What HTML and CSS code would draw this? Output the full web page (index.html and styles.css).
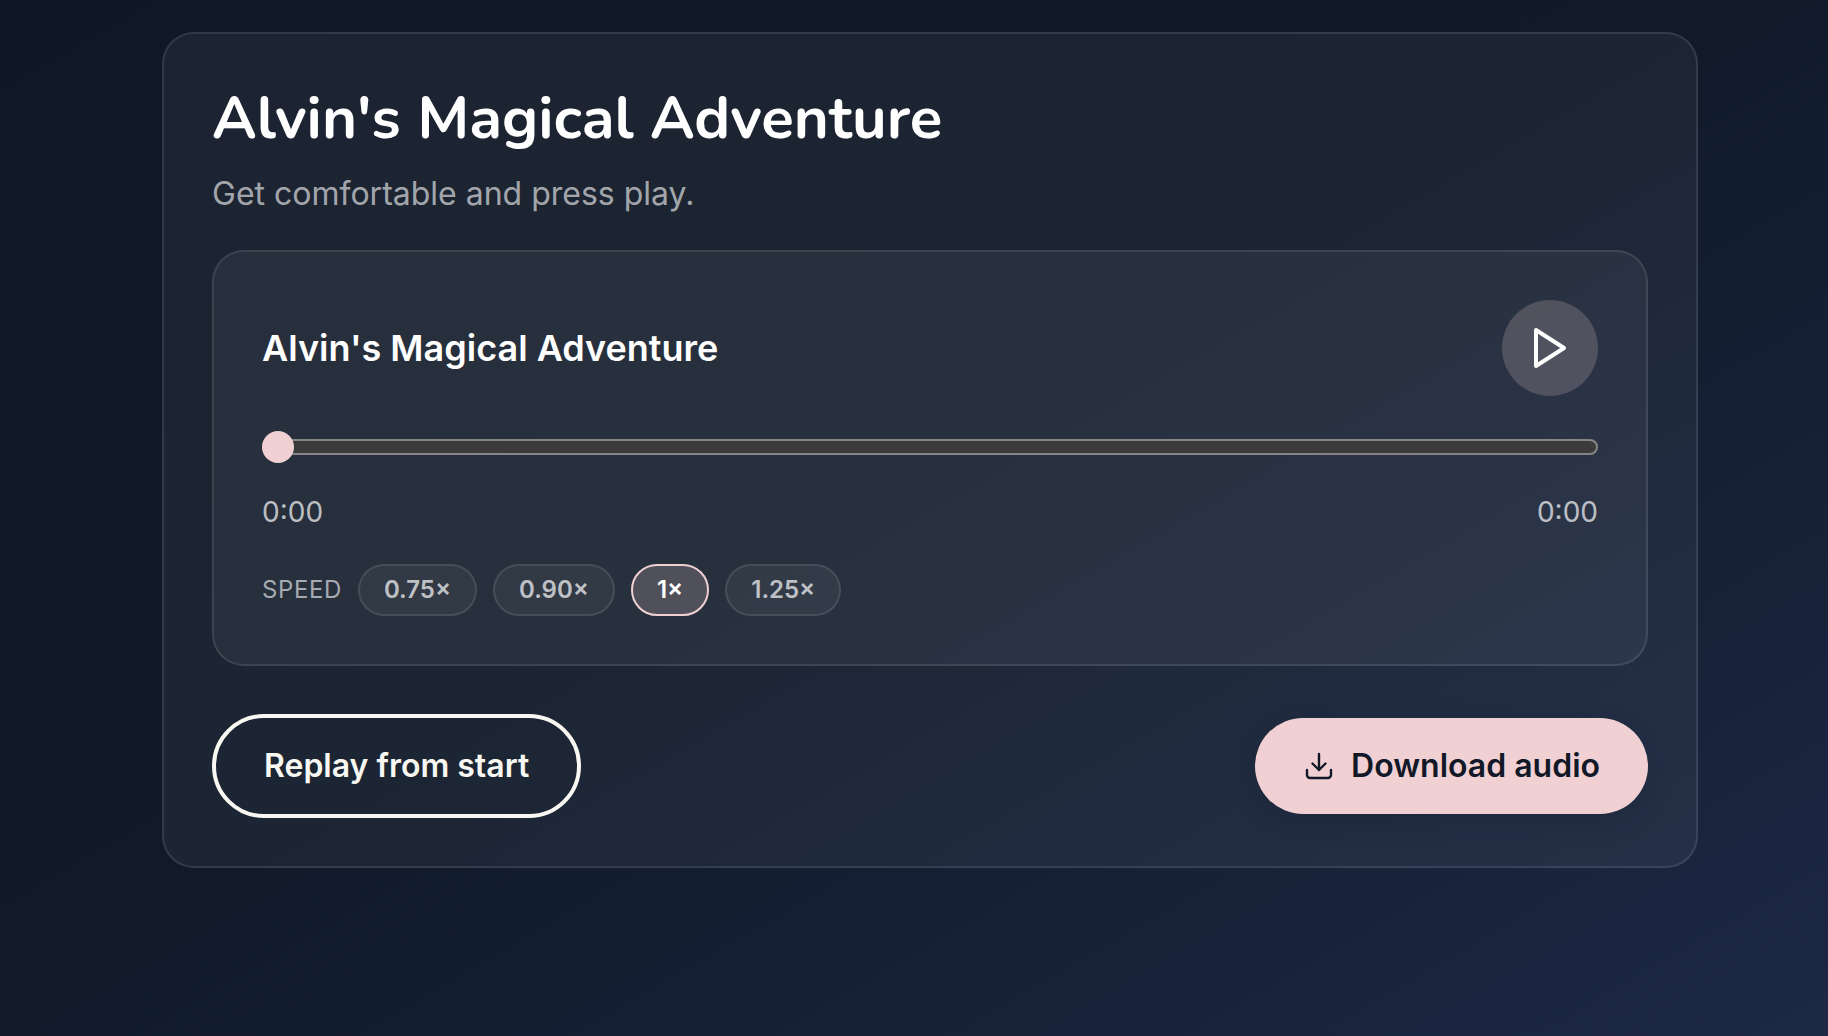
FILE: index.html
```html
<!DOCTYPE html>
<html lang="en">
<head>
<meta charset="utf-8">
<meta name="viewport" content="width=device-width, initial-scale=1">
<title>Alvin's Magical Adventure</title>
<link rel="stylesheet" href="styles.css">
</head>
<body>
<main class="page">
  <section class="card">
    <h1 class="title">Alvin's Magical Adventure</h1>
    <p class="subtitle">Get comfortable and press play.</p>
    <div class="player">
      <div class="player-head">
        <h2 class="track-name">Alvin's Magical Adventure</h2>
        <button class="play" type="button" aria-label="Play">
          <svg viewBox="0 0 48 48" width="48" height="48" fill="none" stroke="currentColor" stroke-width="4" stroke-linecap="round" stroke-linejoin="round"><path d="M10 6L38 24L10 42Z"/></svg>
        </button>
      </div>
      <input class="seek" type="range" min="0" max="100" value="0" aria-label="Playback position">
      <div class="times"><span>0:00</span><span>0:00</span></div>
      <div class="speeds">
        <span class="speed-label">SPEED</span>
        <button class="speed" type="button">0.75×</button>
        <button class="speed" type="button">0.90×</button>
        <button class="speed speed-active" type="button" aria-pressed="true">1×</button>
        <button class="speed" type="button">1.25×</button>
      </div>
    </div>
    <div class="actions">
      <button class="button button-outline" type="button">Replay from start</button>
      <button class="button button-filled" type="button">
        <svg viewBox="0 0 32 32" width="32" height="32" fill="none" stroke="currentColor" stroke-width="2.4" stroke-linecap="round" stroke-linejoin="round"><path d="M4 20v5a3 3 0 0 0 3 3h18a3 3 0 0 0 3-3v-5M9.500 13.500l6.500 6.500 6.500-6.500M16 20V4"/></svg>
        Download audio
      </button>
    </div>
  </section>
</main>
</body>
</html>
```

FILE: styles.css
```css
* { box-sizing: border-box; }

body {
  margin: 0;
  min-height: 100vh;
  background: linear-gradient(150deg, #101827 0%, #101a29 48%, #1d2845 100%);
  color: #fff;
  font-family: Inter, "Liberation Sans", sans-serif;
}

.page { padding: 32px 0 32px 32px; }

.card {
  max-width: 1536px;
  margin: 0 auto;
  padding: 48px;
  border: 2px solid rgba(255, 255, 255, 0.1);
  border-radius: 32px;
  background: rgba(255, 255, 255, 0.05);
}

.title {
  margin: 0 0 16px;
  font: 700 60px/72px Nunito, Lato, sans-serif;
}

.subtitle {
  margin: 0 0 32px;
  color: rgba(255, 255, 255, 0.6);
  font-size: 32px;
  line-height: 48px;
}

.player {
  padding: 48px;
  border: 2px solid rgba(255, 255, 255, 0.1);
  border-radius: 32px;
  background: rgba(255, 255, 255, 0.05);
}

.player-head {
  display: flex;
  align-items: center;
  justify-content: space-between;
}

.track-name {
  margin: 0;
  font-size: 36px;
  font-weight: 600;
  line-height: 56px;
}

.play {
  display: flex;
  align-items: center;
  justify-content: center;
  width: 96px;
  height: 96px;
  padding: 0;
  border: 0;
  border-radius: 50%;
  background: rgba(240, 208, 210, 0.2);
  color: #fff;
}

.seek {
  display: block;
  width: 100%;
  height: 38px;
  margin: 32px 0 26px;
  background: none;
  appearance: none;
}

.seek::-webkit-slider-runnable-track {
  height: 16px;
  border-radius: 8px;
  background: #3b3b3b;
  box-shadow: inset 0 0 0 2px #858585;
}

.seek::-webkit-slider-thumb {
  width: 32px;
  height: 32px;
  margin-top: -8px;
  border-radius: 50%;
  background: #f0d0d2;
  appearance: none;
}

.times {
  display: flex;
  justify-content: space-between;
  margin-bottom: 32px;
  color: rgba(255, 255, 255, 0.7);
  font-size: 28px;
  line-height: 40px;
}

.speeds {
  display: flex;
  align-items: center;
  gap: 16px;
}

.speed-label {
  color: rgba(255, 255, 255, 0.6);
  font-size: 24px;
  letter-spacing: 0.025em;
  line-height: 32px;
}

.speed {
  padding: 8px 24px;
  border: 2px solid rgba(255, 255, 255, 0.1);
  border-radius: 26px;
  background: rgba(255, 255, 255, 0.05);
  color: rgba(255, 255, 255, 0.7);
  font: 600 24px/32px Inter, "Liberation Sans", sans-serif;
}

.speed-active {
  border-color: #f0d0d2;
  background-color: rgba(240, 208, 210, 0.2);
  color: #fff;
}

.actions {
  display: flex;
  align-items: center;
  justify-content: space-between;
  margin-top: 48px;
}

.button {
  display: flex;
  align-items: center;
  gap: 16px;
  padding: 24px 48px;
  border: 0;
  border-radius: 52px;
  font: 600 32px/48px Inter, "Liberation Sans", sans-serif;
}

.button-outline {
  border: 4px solid #f8f7f2;
  background: none;
  color: #f8f7f2;
}

.button-filled {
  background: #f0d0d2;
  box-shadow: 0 8px 24px rgba(17, 24, 39, 0.2);
  color: #111827;
}
```
